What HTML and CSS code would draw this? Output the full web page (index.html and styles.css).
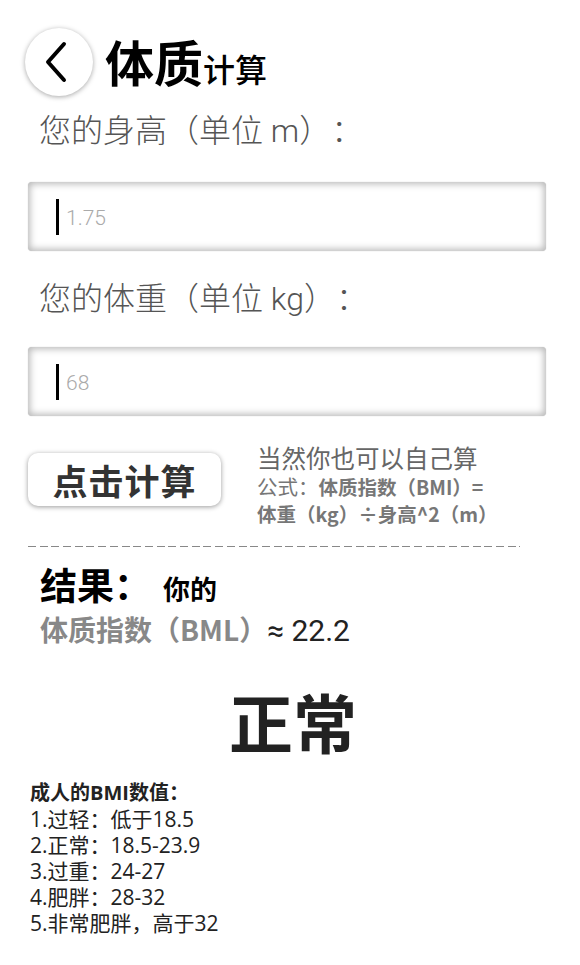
FILE: index.html
```html
<!DOCTYPE html>
<html lang="zh">
<head>
<meta charset="utf-8">
<link rel="stylesheet" href="styles.css">
</head>
<body>
<div class="page">
  <header class="header">
    <div class="back">
      <svg width="34" height="44" viewBox="0 0 34 44"><path d="M24 4 L8 22 L24 40" fill="none" stroke="#000" stroke-width="4" stroke-linecap="round" stroke-linejoin="round"/></svg>
    </div>
    <h1 class="title"><span class="big">体质</span><span class="small">计算</span></h1>
  </header>

  <label class="label">您的身高（单位 m）：</label>
  <div class="input"><span class="caret"></span><span class="ph">1.75</span></div>

  <label class="label label2">您的体重（单位 kg）：</label>
  <div class="input input2"><span class="caret"></span><span class="ph">68</span></div>

  <div class="calc-row">
    <div class="btn">点击计算</div>
    <div class="formula">
      <div class="f1">当然你也可以自己算</div>
      <div class="f2">公式：<b>体质指数（BMI）=</b></div>
      <div class="f2"><b>体重（kg）÷身高^2（m）</b></div>
    </div>
  </div>

  <div class="dash"></div>

  <div class="result">
    <div class="r1"><span class="rb">结果：</span><span class="rs">你的</span></div>
    <div class="r2"><span class="gray">体质指数（BML）</span><span class="val">≈ 22.2</span></div>
  </div>

  <div class="status">正常</div>

  <div class="list">
    <div class="lh">成人的BMI数值：</div>
    <div class="li">1.过轻：低于18.5</div>
    <div class="li">2.正常：18.5-23.9</div>
    <div class="li">3.过重：24-27</div>
    <div class="li">4.肥胖：28-32</div>
    <div class="li">5.非常肥胖，高于32</div>
  </div>
</div>
</body>
</html>
```
FILE: styles.css
```css
* { box-sizing: border-box; }
html, body { margin: 0; padding: 0; background: #fff; }
body { font-family: "Open Sans", "Noto Sans CJK SC", sans-serif; color: #000; text-spacing-trim: space-all; }
.page { width: 580px; padding: 0 34px 0 28px; }

.header { display: flex; align-items: center; padding-top: 28px; height: 96px; }
.back {
  width: 68px; height: 68px; border-radius: 50%; background: #fff;
  box-shadow: 0 1px 5px rgba(0,0,0,0.35);
  display: flex; align-items: center; justify-content: center;
  margin-left: -3px; padding-right: 4px;
}
.title { margin: -4px 0 0 12px; font-weight: 700; display: flex; align-items: baseline; line-height: 1; font-family: "Noto Sans CJK SC", sans-serif; }
.title .big { font-size: 49px; }
.title .small { font-size: 32px; font-weight: 500; }

.label {
  display: block; margin: 13px 0 0 11px; font-size: 32px; line-height: 44px;
  color: #555; font-weight: 300; font-family: "Roboto", "Noto Sans CJK SC", sans-serif;
}
.label2 { margin-top: 26px; }

.input {
  margin-top: 29px; height: 69px; border-radius: 4px;
  background: #fff;
  box-shadow: inset 0 0 7px 2px rgba(0,0,0,0.28), 0 0 1px rgba(0,0,0,0.3);
  display: flex; align-items: center; padding-left: 28px;
}
.input2 { margin-top: 26px; }
.caret { width: 3px; height: 36px; background: #000; margin-right: 7px; }
.ph { font-family: "Roboto", sans-serif; font-size: 21px; color: #aaa; font-weight: 300; margin-top: 2px; }

.calc-row { display: flex; align-items: flex-start; margin-top: 26px; }
.btn {
  margin-top: 11px; width: 193px; height: 53px; border-radius: 10px; background: #fff;
  box-shadow: 0 1px 5px rgba(0,0,0,0.4);
  display: flex; align-items: center; justify-content: center;
  font-family: "Noto Sans CJK SC", sans-serif; font-size: 35px; font-weight: 700; color: #333;
  letter-spacing: 1px;
}
.formula { margin-left: 36px; color: #777; font-family: "Noto Sans CJK SC", sans-serif; }
.f1 { font-size: 24.5px; line-height: 31px; color: #666; }
.f2 { font-size: 20.5px; line-height: 26px; }
.f2 b { font-size: 19.5px; }

.dash {
  margin-top: 19px; width: 492px; height: 1px;
  background: repeating-linear-gradient(90deg, #888 0 8px, transparent 8px 11.7px);
}

.result { margin: 15px 0 0 12px; font-family: "Noto Sans CJK SC", sans-serif; }
.r1 { display: flex; align-items: baseline; line-height: 44px; }
.rb { font-size: 37px; font-weight: 700; }
.rs { font-size: 27px; font-weight: 700; margin-left: 12px; }
.r2 { line-height: 36px; display: flex; align-items: baseline; }
.gray { color: #888; font-weight: 700; font-size: 28px; }
.val { font-family: "Roboto", sans-serif; font-size: 30px; color: #222; }

.status {
  text-align: center; margin-top: 31px; padding-left: 12px; font-family: "Noto Sans CJK SC", sans-serif;
  font-size: 64px; font-weight: 700; color: #222; line-height: 80px;
}

.list { margin: 20px 0 0 2px; line-height: 26px; color: #222; font-family: "Open Sans", "Noto Sans CJK SC", sans-serif; }
.li { font-size: 21px; }
.lh { font-weight: 700; font-size: 20px; }
```
